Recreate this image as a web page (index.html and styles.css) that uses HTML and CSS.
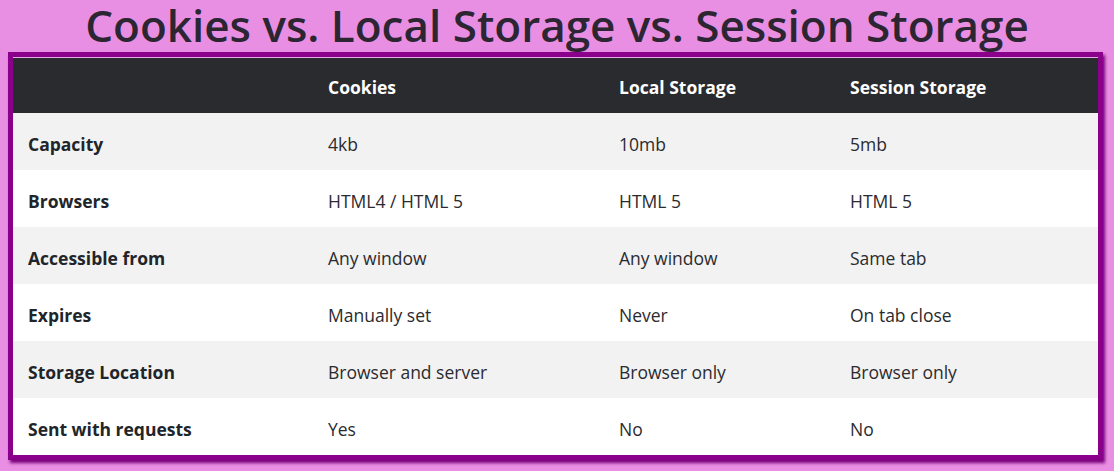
FILE: index.html
```html
<!DOCTYPE html>
<html>
<head>
<meta charset="utf-8">
<link rel="stylesheet" href="styles.css">
</head>
<body>
<h1 class="title">Cookies vs. Local Storage vs. Session Storage</h1>
<div class="frame">
<table class="cmp">
<thead>
<tr><th></th><th>Cookies</th><th>Local Storage</th><th>Session Storage</th></tr>
</thead>
<tbody>
<tr><th>Capacity</th><td>4kb</td><td>10mb</td><td>5mb</td></tr>
<tr><th>Browsers</th><td>HTML4 / HTML 5</td><td>HTML 5</td><td>HTML 5</td></tr>
<tr><th>Accessible from</th><td>Any window</td><td>Any window</td><td>Same tab</td></tr>
<tr><th>Expires</th><td>Manually set</td><td>Never</td><td>On tab close</td></tr>
<tr><th>Storage Location</th><td>Browser and server</td><td>Browser only</td><td>Browser only</td></tr>
<tr><th>Sent with requests</th><td>Yes</td><td>No</td><td>No</td></tr>
</tbody>
</table>
</div>
</body>
</html>
```
FILE: styles.css
```css
html, body {
  margin: 0;
  padding: 0;
}
body {
  background: #e88fe3;
  font-family: "Open Sans", "Noto Sans", sans-serif;
  color: #212529;
  width: 1114px;
  height: 471px;
  overflow: hidden;
}
.title {
  margin: 0;
  height: 52px;
  line-height: 50px;
  font-size: 44px;
  font-weight: 600;
  text-align: center;
  color: #2c2532;
  letter-spacing: 0;
}
.frame {
  margin-left: 8px;
  width: 1085px;
  border: 5px solid #8b008b;
  box-shadow: 2px 3px 3px #7a007a;
  background: #fff;
}
.cmp {
  width: 1085px;
  border-collapse: collapse;
  table-layout: fixed;
  font-size: 17.5px;
}
.cmp thead tr {
  background: #2a2b2e;
  color: #fff;
  border-top: 1px solid #e7a9e6;
}
.cmp thead th {
  height: 55px;
  font-weight: 700;
  text-align: left;
  padding: 3px 15px 0;
}
.cmp thead th:nth-child(1) { width: 300px; }
.cmp thead th:nth-child(2) { width: 291px; }
.cmp thead th:nth-child(3) { width: 231px; }
.cmp thead th:nth-child(4) { width: 263px; }
.cmp th, .cmp td {
  box-sizing: border-box;
}
.cmp tbody th,
.cmp tbody td {
  height: 57px;
  padding: 5px 15px 0;
  text-align: left;
}
.cmp tbody th {
  font-weight: 700;
}
.cmp tbody td {
  font-weight: 400;
  color: #2b2b2f;
}
.cmp tbody tr:nth-child(odd) {
  background: #f2f2f2;
}
.cmp tbody tr:nth-child(even) {
  background: #fff;
}
```
